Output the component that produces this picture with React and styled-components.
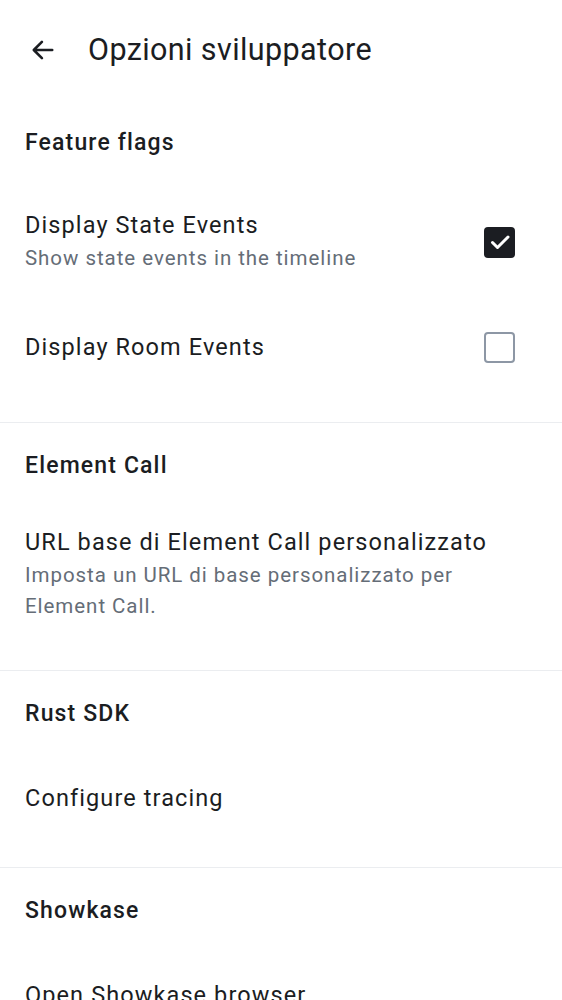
import React from 'react'
import styled, { createGlobalStyle } from 'styled-components'

const GlobalStyle = createGlobalStyle`
  html, body {
    margin: 0;
    padding: 0;
    background: #ffffff;
  }
  body {
    font-family: Roboto, "Noto Sans", sans-serif;
    -webkit-font-smoothing: antialiased;
    color: #1b1d22;
  }
`

const Screen = styled.div`
  width: 562px;
  height: 1000px;
  overflow: hidden;
  background: #ffffff;
  display: flex;
  flex-direction: column;
`

const TopBar = styled.div`
  height: 100px;
  display: flex;
  align-items: center;
  padding-left: 29px;
  flex-shrink: 0;
`

const BackButton = styled.button`
  border: none;
  background: none;
  padding: 0;
  width: 28px;
  height: 28px;
  display: flex;
  align-items: center;
  justify-content: center;
  color: #1b1d22;
  margin-right: 31px;
`

const Title = styled.h1`
  margin: 0;
  font-size: 30.5px;
  font-weight: 400;
  line-height: 38px;
  letter-spacing: 0.4px;
`

const Section = styled.section`
  display: flex;
  flex-direction: column;
  padding-bottom: ${p => p.$bottom}px;
  border-bottom: ${p => (p.$divider ? '1px solid #ebedf0' : 'none')};
  flex-shrink: 0;
`

const SectionHeader = styled.div`
  padding: 29px 25px 0;
  font-size: 23px;
  line-height: 28px;
  font-weight: 500;
  letter-spacing: 1.15px;
  margin-bottom: 31px;
`

const Item = styled.div`
  display: flex;
  align-items: center;
  min-height: ${p => p.$height}px;
  padding: ${p => p.$shift || 16}px 47px 16px 25px;
  box-sizing: border-box;
`

const ItemText = styled.div`
  flex: 1;
  display: flex;
  flex-direction: column;
`

const ItemTitle = styled.div`
  font-size: 23.5px;
  line-height: 30px;
  font-weight: 400;
  letter-spacing: 1.1px;
`

const ItemSubtitle = styled.div`
  margin-top: 3px;
  font-size: 20.5px;
  line-height: 31px;
  letter-spacing: 0.95px;
  color: #656d77;
  padding-right: 40px;
`

const Box = styled.div`
  width: 31px;
  height: 31px;
  box-sizing: border-box;
  border-radius: 4px;
  flex-shrink: 0;
  display: flex;
  align-items: center;
  justify-content: center;
  background: ${p => (p.$checked ? '#1b1d22' : 'transparent')};
  border: ${p => (p.$checked ? 'none' : '2.5px solid #8d97a5')};
`

const Checkbox = ({ checked }) => (
  <Box $checked={checked}>
    {checked && (
      <svg width="24" height="24" viewBox="0 0 24 24" fill="none">
        <path d="M4.5 12.5l5 5L20 7" stroke="#ffffff" strokeWidth="3" strokeLinecap="round" strokeLinejoin="round" />
      </svg>
    )}
  </Box>
)

const ArrowBack = () => (
  <svg width="26" height="26" viewBox="0 0 24 24" fill="none">
    <path d="M20.5 12H4M11 4.5L3.5 12l7.5 7.5" stroke="currentColor" strokeWidth="2.4" strokeLinecap="round" strokeLinejoin="round" />
  </svg>
)

const App = () => (
  <Screen>
    <GlobalStyle />
    <TopBar>
      <BackButton aria-label="Indietro">
        <ArrowBack />
      </BackButton>
      <Title>Opzioni sviluppatore</Title>
    </TopBar>

    <Section $bottom={22} $divider>
      <SectionHeader>Feature flags</SectionHeader>
      <Item $height={106} $shift={18}>
        <ItemText>
          <ItemTitle>Display State Events</ItemTitle>
          <ItemSubtitle>Show state events in the timeline</ItemSubtitle>
        </ItemText>
        <Checkbox checked />
      </Item>
      <Item $height={106}>
        <ItemText>
          <ItemTitle>Display Room Events</ItemTitle>
        </ItemText>
        <Checkbox />
      </Item>
    </Section>

    <Section $bottom={32} $divider>
      <SectionHeader>Element Call</SectionHeader>
      <Item $height={78}>
        <ItemText>
          <ItemTitle>URL base di Element Call personalizzato</ItemTitle>
          <ItemSubtitle>Imposta un URL di base personalizzato per Element Call.</ItemSubtitle>
        </ItemText>
      </Item>
    </Section>

    <Section $bottom={30} $divider>
      <SectionHeader>Rust SDK</SectionHeader>
      <Item $height={78}>
        <ItemText>
          <ItemTitle>Configure tracing</ItemTitle>
        </ItemText>
      </Item>
    </Section>

    <Section $bottom={31}>
      <SectionHeader>Showkase</SectionHeader>
      <Item $height={78}>
        <ItemText>
          <ItemTitle>Open Showkase browser</ItemTitle>
        </ItemText>
      </Item>
    </Section>
  </Screen>
)

export default App
